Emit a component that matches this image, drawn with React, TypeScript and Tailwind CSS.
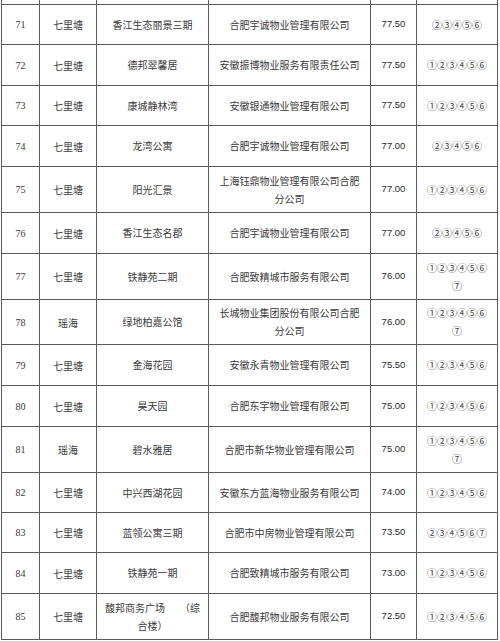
const cjk = "font-['Noto_Sans_CJK_SC',sans-serif]";

type Row = {
  no: string;
  area: string;
  name: string[];
  company: string[];
  score: string;
  marks: string[];
  h: string;
};

const rows: Row[] = [
  { no: "71", area: "七里塘", name: ["香江生态丽景三期"], company: ["合肥宇诚物业管理有限公司"], score: "77.50", marks: ["②③④⑤⑥"], h: "h-[40px]" },
  { no: "72", area: "七里塘", name: ["德邦翠馨居"], company: ["安徽振博物业服务有限责任公司"], score: "77.50", marks: ["①②③④⑤⑥"], h: "h-[41px]" },
  { no: "73", area: "七里塘", name: ["康城静林湾"], company: ["安徽银通物业管理有限公司"], score: "77.50", marks: ["①②③④⑤⑥"], h: "h-[40px]" },
  { no: "74", area: "七里塘", name: ["龙湾公寓"], company: ["合肥宇诚物业管理有限公司"], score: "77.00", marks: ["②③④⑤⑥"], h: "h-[41px]" },
  { no: "75", area: "七里塘", name: ["阳光汇景"], company: ["上海钰鼎物业管理有限公司合肥", "分公司"], score: "77.00", marks: ["①②③④⑤⑥"], h: "h-[46px]" },
  { no: "76", area: "七里塘", name: ["香江生态名郡"], company: ["合肥宇诚物业管理有限公司"], score: "77.00", marks: ["②③④⑤⑥"], h: "h-[41px]" },
  { no: "77", area: "七里塘", name: ["铁静苑二期"], company: ["合肥致精城市服务有限公司"], score: "76.00", marks: ["①②③④⑤⑥", "⑦"], h: "h-[46px]" },
  { no: "78", area: "瑶海", name: ["绿地柏嘉公馆"], company: ["长城物业集团股份有限公司合肥", "分公司"], score: "76.00", marks: ["①②③④⑤⑥", "⑦"], h: "h-[45px]" },
  { no: "79", area: "七里塘", name: ["金海花园"], company: ["安徽永青物业管理有限公司"], score: "75.50", marks: ["①②③④⑤⑥"], h: "h-[41px]" },
  { no: "80", area: "七里塘", name: ["昊天园"], company: ["合肥东宇物业管理有限公司"], score: "75.00", marks: ["①②③④⑤⑥"], h: "h-[41px]" },
  { no: "81", area: "瑶海", name: ["碧水雅居"], company: ["合肥市新华物业管理有限公司"], score: "75.00", marks: ["①②③④⑤⑥", "⑦"], h: "h-[46px]" },
  { no: "82", area: "七里塘", name: ["中兴西湖花园"], company: ["安徽东方蓝海物业服务有限公司"], score: "74.00", marks: ["①②③④⑤⑥"], h: "h-[40px]" },
  { no: "83", area: "七里塘", name: ["蓝领公寓三期"], company: ["合肥市中房物业管理有限公司"], score: "73.50", marks: ["②③④⑤⑥⑦"], h: "h-[40px]" },
  { no: "84", area: "七里塘", name: ["铁静苑一期"], company: ["合肥致精城市服务有限公司"], score: "73.00", marks: ["①②③④⑤⑥"], h: "h-[41px]" },
  { no: "85", area: "七里塘", name: ["馥邦商务广场\u3000\u3000（综", "合楼）"], company: ["合肥馥邦物业服务有限公司"], score: "72.50", marks: ["①②③④⑤⑥"], h: "h-[46px]" },
];

const cell = "flex flex-col items-center justify-center border-r border-b border-[#5a5a5a] text-center";

const Lines = ({ lines }: { lines: string[] }) => (
  <>
    {lines.map((l, i) => (
      <span key={i} className="block leading-[18px] whitespace-pre">
        {l}
      </span>
    ))}
  </>
);

export default function App() {
  return (
    <div className="w-[500px] h-[641px] bg-white overflow-hidden text-[#3a3a3a]">
      <div className="ml-[1px] w-[497px] grid grid-cols-[38px_57px_112px_162px_46px_81px] border-l border-[#5a5a5a]">
        {/* tail of previous row */}
        <div className={`${cell} h-[5px]`} />
        <div className={`${cell} h-[5px]`} />
        <div className={`${cell} h-[5px]`} />
        <div className={`${cell} h-[5px]`} />
        <div className={`${cell} h-[5px]`} />
        <div className={`${cell} h-[5px]`} />
        {rows.map((r) => (
          <div key={r.no} className="contents">
            <div className={`${cell} ${r.h} font-['Liberation_Serif',serif] text-[10px]`}>{r.no}</div>
            <div className={`${cell} ${r.h} ${cjk} text-[10px]`}>{r.area}</div>
            <div className={`${cell} ${r.h} ${cjk} text-[10px]`}>
              <Lines lines={r.name} />
            </div>
            <div className={`${cell} ${r.h} ${cjk} text-[10px]`}>
              <Lines lines={r.company} />
            </div>
            <div className={`${cell} ${r.h} font-['Liberation_Sans',sans-serif] text-[9.5px] text-[#2a2a2a]`}>{r.score}</div>
            <div className={`${cell} ${r.h} ${cjk} text-[10px]`}>
              <Lines lines={r.marks} />
            </div>
          </div>
        ))}
      </div>
    </div>
  );
}
